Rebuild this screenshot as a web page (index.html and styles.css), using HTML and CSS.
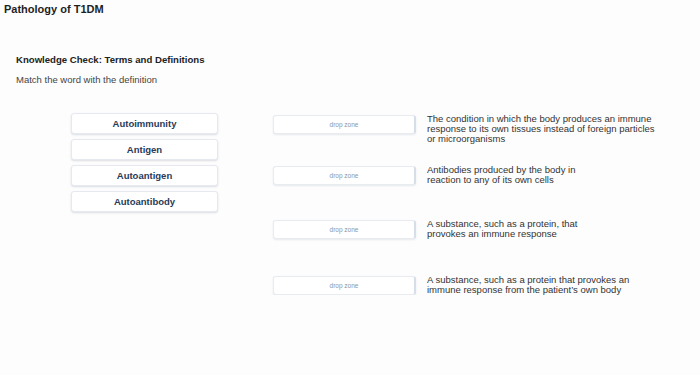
FILE: index.html
```html
<!DOCTYPE html>
<html>
<head>
<meta charset="utf-8">
<link rel="stylesheet" href="styles.css">
</head>
<body>
<h1 class="title">Pathology of T1DM</h1>
<section class="check">
  <h2 class="check-title">Knowledge Check: Terms and Definitions</h2>
  <p class="check-sub">Match the word with the definition</p>
  <div class="board">
    <div class="terms">
      <div class="term">Autoimmunity</div>
      <div class="term">Antigen</div>
      <div class="term">Autoantigen</div>
      <div class="term">Autoantibody</div>
    </div>
    <div class="defs">
      <div class="row r1">
        <div class="zone">drop zone</div>
        <p class="def">The condition in which the body produces an immune<br>response to its own tissues instead of foreign particles<br>or microorganisms</p>
      </div>
      <div class="row r2">
        <div class="zone">drop zone</div>
        <p class="def">Antibodies produced by the body in<br>reaction to any of its own cells</p>
      </div>
      <div class="row r3">
        <div class="zone">drop zone</div>
        <p class="def">A substance, such as a protein, that<br>provokes an immune response</p>
      </div>
      <div class="row r4">
        <div class="zone">drop zone</div>
        <p class="def">A substance, such as a protein that provokes an<br>immune response from the patient’s own body</p>
      </div>
    </div>
  </div>
</section>
</body>
</html>
```

FILE: styles.css
```css
html, body {
  margin: 0;
  padding: 0;
  background: #fdfdfd;
  font-family: "Liberation Sans", Arial, sans-serif;
  color: #222;
}
.title {
  margin: 0;
  padding: 3px 0 0 4px;
  font-size: 11px;
  line-height: 13px;
  font-weight: bold;
  color: #1f1f1f;
}
.check {
  padding: 0 0 0 16px;
}
.check-title {
  margin: 38px 0 0 0;
  font-size: 9.6px;
  line-height: 12px;
  font-weight: bold;
  color: #222;
}
.check-sub {
  margin: 8px 0 0 0;
  font-size: 9.5px;
  line-height: 11px;
  color: #444;
}
.board {
  display: flex;
  margin-top: 28px;
  padding-left: 55px;
}
.terms {
  display: flex;
  flex-direction: column;
  gap: 5px;
  width: 147px;
}
.term {
  height: 21px;
  box-sizing: border-box;
  border: 1px solid #e6e9ef;
  border-radius: 3px;
  background: #fff;
  box-shadow: 0 1px 2px rgba(60, 80, 110, 0.18);
  display: flex;
  align-items: center;
  justify-content: center;
  font-size: 9.5px;
  font-weight: bold;
  color: #283a58;
}
.defs {
  margin-left: 55px;
  display: flex;
  flex-direction: column;
}
.row {
  display: flex;
  align-items: flex-start;
}
.r1 { margin-top: 2px; }
.r2 { margin-top: 22px; }
.r3 { margin-top: 35px; }
.r4 { margin-top: 37px; }
.zone {
  width: 143px;
  height: 19px;
  box-sizing: border-box;
  border: 1px solid #e8ebf0;
  border-right: 2px solid #d6deea;
  border-radius: 3px;
  background: #fff;
  box-shadow: 0 1px 2px rgba(60, 80, 110, 0.12);
  display: flex;
  align-items: center;
  justify-content: center;
  font-size: 6.5px;
  color: #8d95a3;
}
.def {
  margin: -1px 0 0 11px;
  font-size: 9.5px;
  line-height: 10px;
  color: #333;
}
```
